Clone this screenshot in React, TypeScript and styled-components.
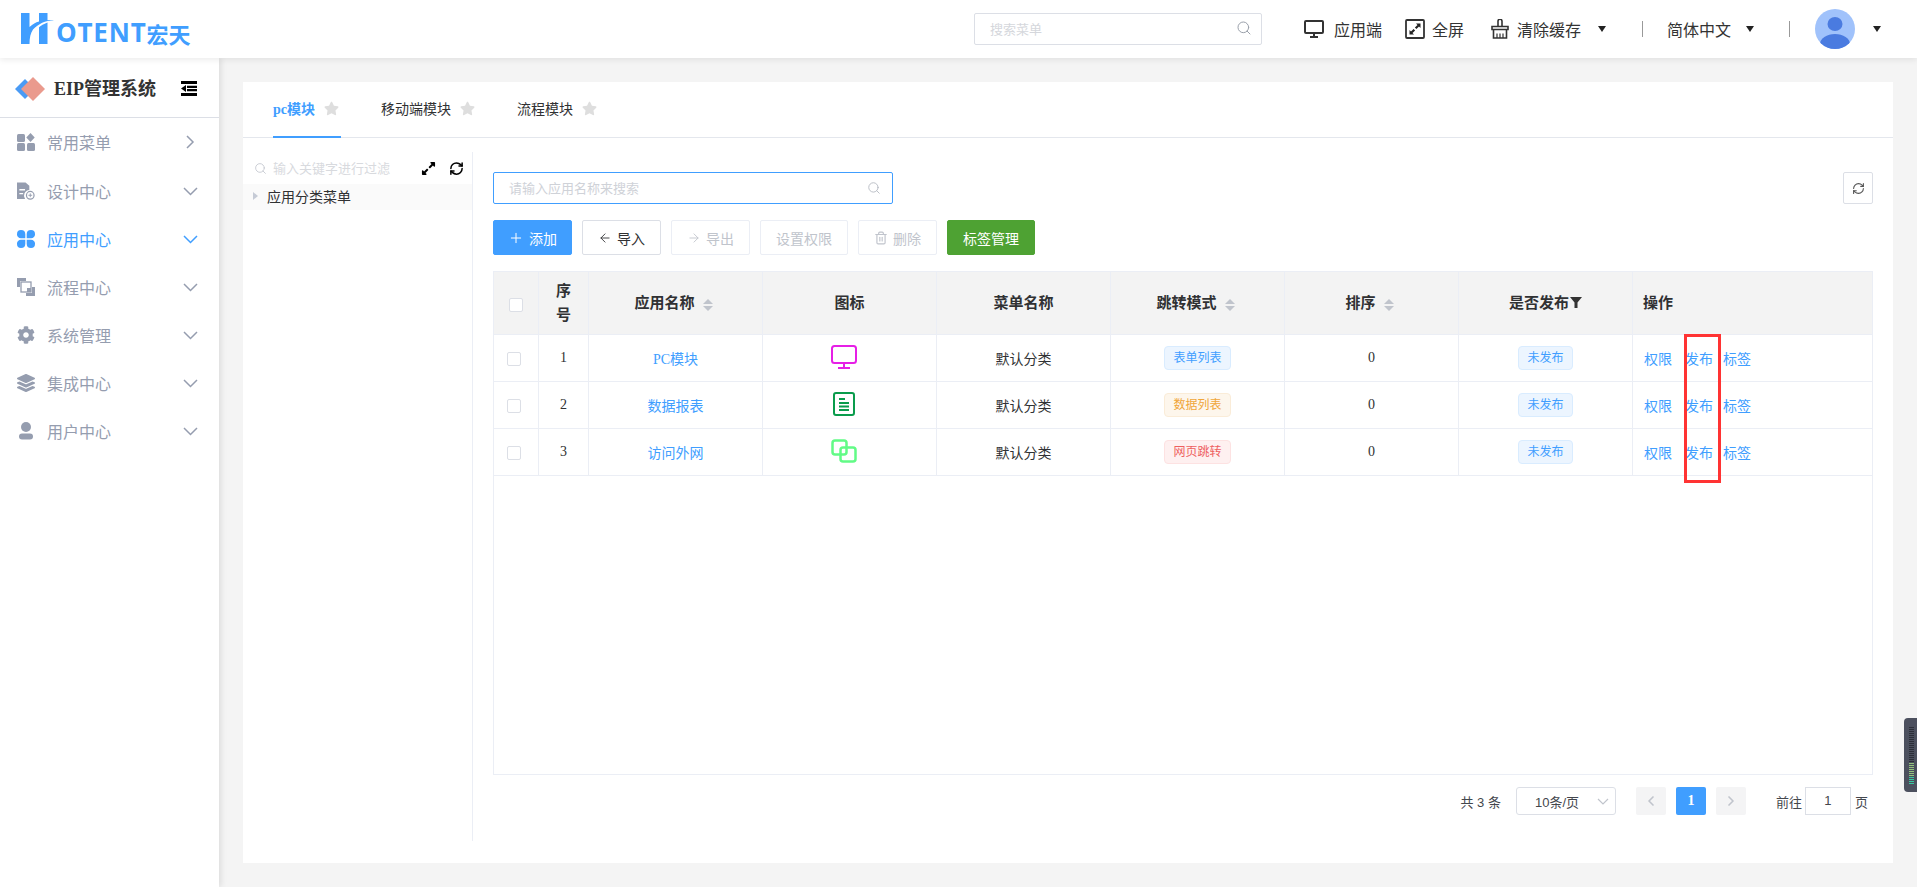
import React from 'react'
import styled, { createGlobalStyle } from 'styled-components'
import { ArrowLeft, ArrowRight, ChevronLeft, ChevronRight, Plus, RefreshCw, Search, Trash2 } from 'lucide-react'
import { FaCog, FaExpandAlt, FaLayerGroup, FaStar } from 'react-icons/fa'

const colors = {
  blue: '#409eff',
  grey: '#959daf',
  text: '#303133',
  border: '#ebeef5',
  line: '#dcdfe6',
  placeholder: '#c6c9d0',
}
const SANS = '"Liberation Sans", "Noto Sans CJK SC", sans-serif'
const SERIF = '"Liberation Serif", "Noto Sans CJK SC", serif'

const GlobalStyle = createGlobalStyle`
  html, body { margin: 0; padding: 0; height: 100%; }
  body { font-family: ${SANS}; color: ${colors.text}; background: #f4f4f4; overflow: hidden; }
  * { box-sizing: border-box; }
`

const Page = styled.div`
  display: flex;
  flex-direction: column;
  height: 100vh;
  position: relative;
`

const TopBar = styled.header`
  position: relative;
  z-index: 2;
  display: flex;
  align-items: center;
  flex: none;
  height: 58px;
  padding: 0 36px 0 21px;
  background: #fff;
  box-shadow: 0 2px 6px rgba(0, 0, 0, 0.08);
`

const Logo = styled.div`
  display: flex;
  align-items: flex-end;
  height: 32px;
  margin-right: auto;
  color: ${colors.blue};
`

const LogoLatin = styled.span`
  margin-left: 2px;
  font: 700 26px/25px "Open Sans", ${SANS};
  letter-spacing: 0.8px;
`

const LogoCjk = styled.span`
  font: 700 22px/23px "Noto Sans CJK SC", sans-serif;
`

const MenuSearch = styled.div`
  display: flex;
  align-items: center;
  justify-content: space-between;
  width: 288px;
  height: 32px;
  padding: 0 9px 2px 15px;
  border: 1px solid ${colors.line};
  border-radius: 2px;
  font-size: 13px;
  color: #d5d7dc;
  svg { color: #9aa0aa; }
`

const TopItem = styled.div<{ $gap: number; $inner?: number }>`
  display: flex;
  align-items: center;
  gap: ${p => p.$inner ?? 8}px;
  margin-left: ${p => p.$gap}px;
  font-size: 16px;
  color: #333;
`

const Caret = styled.i<{ $gap: number }>`
  margin-left: ${p => p.$gap}px;
  border-left: 4.5px solid transparent;
  border-right: 4.5px solid transparent;
  border-top: 6px solid #222;
`

const TopDivider = styled.div<{ $gap: number }>`
  width: 1px;
  height: 16px;
  margin-left: ${p => p.$gap}px;
  background: #999;
`

const Avatar = styled.div<{ $gap: number }>`
  width: 40px;
  height: 40px;
  margin-left: ${p => p.$gap}px;
  svg { display: block; }
`

const Body = styled.div`
  display: flex;
  flex: 1;
  min-height: 0;
`

const Sidebar = styled.aside`
  position: relative;
  z-index: 1;
  flex: none;
  width: 219px;
  background: #fff;
  box-shadow: 2px 0 6px rgba(0, 0, 0, 0.1);
`

const SideTitle = styled.div`
  display: flex;
  align-items: center;
  height: 60px;
  margin-bottom: 1px;
  padding: 2px 22px 0 15px;
  border-bottom: 1px solid ${colors.line};
`

const SideTitleText = styled.span`
  margin-left: 9px;
  margin-right: auto;
  font: 700 18px/24px ${SERIF};
  color: #333;
`

const SideItem = styled.div<{ $active?: boolean }>`
  display: flex;
  align-items: center;
  height: 48px;
  padding: 0 21px 0 17px;
  font-size: 16px;
  color: ${p => (p.$active ? colors.blue : colors.grey)};
  span { margin-right: auto; }
  ${SideTitle} + & { height: 46px; margin-bottom: 2px; }
`

const SideIconSlot = styled.div`
  display: flex;
  flex: none;
  width: 18px;
  margin-right: 12px;
`

const Content = styled.main`
  flex: 1;
  min-width: 0;
  padding: 24px;
  background: #f4f4f4;
`

const Card = styled.div`
  display: flex;
  flex-direction: column;
  height: 100%;
  background: #fff;
`

const Tabs = styled.div`
  display: flex;
  flex: none;
  gap: 40px;
  height: 56px;
  padding-left: 30px;
  border-bottom: 1px solid #e4e7ed;
`

const Tab = styled.div<{ $active?: boolean }>`
  display: flex;
  align-items: center;
  gap: 9px;
  height: 56px;
  padding: 2px 2px 0 0;
  font: ${p => (p.$active ? 700 : 400)} 14px/20px ${SERIF};
  color: ${p => (p.$active ? colors.blue : colors.text)};
  border-bottom: 2px solid ${p => (p.$active ? colors.blue : 'transparent')};
  svg { color: #dedede; margin-top: -4px; }
`

const CardBody = styled.div`
  display: flex;
  flex: 1;
  min-height: 0;
  padding: 14px 0 22px;
`

const TreePanel = styled.div`
  flex: none;
  width: 230px;
  border-right: 1px solid ${colors.border};
`

const TreeFilter = styled.div`
  display: flex;
  align-items: center;
  height: 32px;
  padding: 0 8px 0 11px;
  font-size: 13px;
  color: #d8dade;
  span { margin: 0 auto 2px 6px; }
`

const TreeTool = styled.div`
  display: flex;
  align-items: center;
  margin-left: 13px;
  color: #000;
`

const TreeRow = styled.div`
  display: flex;
  align-items: center;
  height: 26px;
  padding: 0 0 2px 10px;
  background: #fafafa;
  font-size: 14px;
  color: ${colors.text};
  i {
    margin-right: 9px;
    border-top: 4px solid transparent;
    border-bottom: 4px solid transparent;
    border-left: 5px solid #c6cbd6;
  }
`

const Main = styled.div`
  display: flex;
  flex: 1;
  flex-direction: column;
  min-width: 0;
  padding: 20px 20px 26px;
`

const SearchRow = styled.div`
  display: flex;
  align-items: center;
  justify-content: space-between;
  flex: none;
  height: 32px;
`

const AppSearch = styled.div`
  display: flex;
  align-items: center;
  justify-content: space-between;
  width: 400px;
  height: 32px;
  padding: 0 11px 2px 15px;
  border: 1px solid ${colors.blue};
  border-radius: 2px;
  font-size: 13px;
  color: #cfd2d8;
  svg { color: #b4b8c0; margin-top: 2px; }
`

const RefreshButton = styled.div`
  display: flex;
  align-items: center;
  justify-content: center;
  width: 30px;
  height: 32px;
  border: 1px solid ${colors.line};
  border-radius: 2px;
  color: #555;
`

const Toolbar = styled.div`
  display: flex;
  flex: none;
  gap: 10px;
  margin: 16px 0;
`

const Button = styled.div<{ $width: number; $kind?: 'primary' | 'success' | 'plain' | 'disabled' }>`
  display: flex;
  align-items: center;
  justify-content: center;
  gap: 5px;
  width: ${p => p.$width}px;
  height: 35px;
  border-radius: 2px;
  font-size: 14px;
  color: ${p =>
    p.$kind === 'primary' || p.$kind === 'success' ? '#fff' : p.$kind === 'plain' ? colors.text : '#c0c4cc'};
  background: ${p => (p.$kind === 'primary' ? colors.blue : p.$kind === 'success' ? '#4ea233' : '#fff')};
  border: 1px solid
    ${p =>
      p.$kind === 'primary' ? colors.blue : p.$kind === 'success' ? '#4ea233' : p.$kind === 'plain' ? colors.line : colors.border};
`

const TableFrame = styled.div`
  position: relative;
  flex: 1;
  min-height: 0;
  border: 1px solid ${colors.border};
`

const Table = styled.table`
  width: 100%;
  table-layout: fixed;
  border-collapse: separate;
  border-spacing: 0;
  font-family: ${SERIF};
  font-size: 14px;
`

const Th = styled.th<{ $left?: boolean }>`
  height: 63px;
  padding: 0 10px;
  background: #f3f3f3;
  border-right: 1px solid ${colors.border};
  border-bottom: 1px solid ${colors.border};
  font-size: 15px;
  font-weight: 700;
  line-height: 24px;
  color: ${colors.text};
  text-align: ${p => (p.$left ? 'left' : 'center')};
  &:last-child { border-right: 0; }
`

const Td = styled.td`
  height: 47px;
  padding: 0 8px;
  border-right: 1px solid ${colors.border};
  border-bottom: 1px solid ${colors.border};
  color: ${colors.text};
  text-align: center;
  &:last-child { border-right: 0; padding-left: 11px; }
`

const CheckBox = styled.span<{ $shift: number }>`
  display: inline-block;
  position: relative;
  left: ${p => p.$shift}px;
  width: 14px;
  height: 14px;
  vertical-align: middle;
  background: #fff;
  border: 1px solid ${colors.line};
  border-radius: 2px;
`

const SortCaret = styled.span`
  display: inline-flex;
  flex-direction: column;
  gap: 2px;
  margin: 0 4px 0 8px;
  vertical-align: middle;
  &::before, &::after { content: ''; border-left: 5px solid transparent; border-right: 5px solid transparent; }
  &::before { border-bottom: 5px solid #c0c4cc; }
  &::after { border-top: 5px solid #c0c4cc; }
`

const FilterIcon = styled.svg`
  margin-left: 1px;
  vertical-align: 0;
`

const AppLink = styled.a`
  color: ${colors.blue};
`

const RowIcon = styled.svg`
  display: block;
  margin: -3px auto 0 calc(50% - 19px);
`

const tagTones = {
  blue: { color: '#409eff', bg: '#ecf5ff', line: '#d9ecff' },
  orange: { color: '#f0a63a', bg: '#fdf6ec', line: '#faecd8' },
  red: { color: '#ee5f5f', bg: '#fef0f0', line: '#fde2e2' },
}

const Tag = styled.span<{ $tone: keyof typeof tagTones }>`
  display: inline-block;
  height: 24px;
  padding: 0 8px;
  border-radius: 4px;
  font: 12px/22px ${SANS};
  color: ${p => tagTones[p.$tone].color};
  background: ${p => tagTones[p.$tone].bg};
  border: 1px solid ${p => tagTones[p.$tone].line};
`

const Actions = styled.div`
  display: flex;
  gap: 13px;
  margin-top: -1px;
  font-size: 14px;
  color: ${colors.blue};
  font-family: ${SANS};
  span:last-child { margin-left: -3px; }
`

const RedMark = styled.div`
  position: absolute;
  left: 1190px;
  top: 62px;
  width: 37px;
  height: 149px;
  border: 3px solid #ff3333;
  pointer-events: none;
`

const Pager = styled.div`
  display: flex;
  align-items: center;
  justify-content: flex-end;
  flex: none;
  height: 28px;
  margin-top: 12px;
  padding-right: 5px;
  font-size: 13px;
  color: #44474d;
`

const PageSize = styled.div`
  display: flex;
  align-items: center;
  justify-content: space-between;
  width: 100px;
  height: 28px;
  margin: 0 20px 0 15px;
  padding: 0 6px 0 18px;
  border: 1px solid ${colors.line};
  border-radius: 3px;
  svg { color: #c0c4cc; }
`

const PageButton = styled.div<{ $active?: boolean }>`
  display: flex;
  align-items: center;
  justify-content: center;
  width: 30px;
  height: 28px;
  margin-right: 10px;
  border-radius: 2px;
  font: 700 14px ${SERIF};
  color: ${p => (p.$active ? '#fff' : '#c0c4cc')};
  background: ${p => (p.$active ? colors.blue : '#f4f4f5')};
`

const JumpLabel = styled.span`
  margin-left: 20px;
`

const JumpInput = styled.div`
  width: 46px;
  height: 28px;
  margin: 0 4px 0 3px;
  border: 1px solid ${colors.line};
  font-size: 13px;
  line-height: 26px;
  text-align: center;
`

const EdgeWidget = styled.div`
  position: absolute;
  right: 0;
  top: 718px;
  z-index: 3;
  width: 13px;
  height: 74px;
  padding: 9px 3px 8px 5px;
  border-radius: 4px 0 0 4px;
  background: #4c505e;
  &::before {
    content: '';
    display: block;
    height: 100%;
    background:
      repeating-linear-gradient(to bottom, transparent 0 1px, #4c505e 1px 2px),
      linear-gradient(to bottom, #2c2f38 0 62%, #93c47d 62% 86%, #37c9a0 86%);
  }
`

const MonitorIcon = () => (
  <svg width="20" height="18" viewBox="0 0 20 18" fill="none">
    <rect x="1" y="1" width="18" height="12" rx="1" stroke="#333" strokeWidth="2" />
    <path d="M10 13v3M6 17h8" stroke="#333" strokeWidth="2" />
  </svg>
)

const FullIcon = () => (
  <svg width="20" height="20" viewBox="0 0 20 20" fill="none">
    <rect x="1" y="1" width="18" height="18" rx="1" stroke="#333" strokeWidth="1.8" />
    <path d="M11 4.500h4.500V9l-1.500-1.500-2.600 2.600-1.500-1.500 2.600-2.600zM9 15.500H4.500V11L6 12.500l2.600-2.600 1.500 1.500-2.600 2.600z" fill="#222" />
  </svg>
)

const BroomIcon = () => (
  <svg width="20" height="20" viewBox="0 0 20 20" fill="none" stroke="#333" strokeWidth="1.6">
    <path d="M8 7V2.200a2 2 0 0 1 4 0V7" />
    <path d="M2 7.500h16v3H2zM3.500 10.500V19h13v-8.500" />
    <path d="M7 14.500V19M10 14.500V19M13 14.500V19" strokeWidth="1.2" />
  </svg>
)

const HMark = () => (
  <svg width="33" height="31" viewBox="0 0 33 31" style={{ display: 'block', marginBottom: 1 }}>
    <path d="M0 0h8.500v14C12 11 14.500 9.500 18 8.500V0h8.500v7.200c2-.2 4.500-.2 6.500 0-9 .3-15.500 3.500-21 9.300C9.500 20 8.500 25 8.500 31H0z" fill={colors.blue} />
    <path d="M26.500 9.500V31H18V14.300c2.500-2 5.500-3.700 8.500-4.800z" fill={colors.blue} />
  </svg>
)

const DiamondLogo = () => (
  <svg width="30" height="24" viewBox="0 0 30 24">
    <path d="M10 2l10 10-10 10L0 12z" fill="#4a9bf5" />
    <path d="M18 0l12 12-12 12L6 12z" fill="#ea9a8d" />
  </svg>
)

const CollapseIcon = () => (
  <svg width="16" height="15" viewBox="0 0 16 15" fill="#000">
    <path d="M0 0h16v3H0zM0 12h16v3H0zM6 4.800h10v2.200H6zM6 8h10v2.200H6zM0 7.500l5-3.500v7z" />
  </svg>
)

const SideGlyph = ({ name }: { name: string }) => {
  if (name === 'grid')
    return (
      <svg width="18" height="18" viewBox="0 0 18 18" fill="currentColor">
        <rect x="0" y="1" width="8" height="8" rx="1.500" />
        <path d="M13.500 0l4.200 4.500-4.200 4.500-4.200-4.500z" />
        <rect x="0" y="10" width="8" height="8" rx="1.500" />
        <rect x="10" y="10" width="8" height="8" rx="1.500" />
      </svg>
    )
  if (name === 'doc')
    return (
      <svg width="19" height="18" viewBox="0 0 19 18" fill="currentColor">
        <path d="M0 0h9l4 3.500V8a6 6 0 0 0-4.500 9.500H0z" />
        <path d="M2.500 7h6v1.500h-6zM2.500 11h4v1.500h-4z" fill="#fff" />
        <circle cx="14" cy="13.500" r="4" fill="none" stroke="currentColor" strokeWidth="1.300" />
        <path d="M14 11.500v4M12 13.500h4" stroke="currentColor" strokeWidth="1" />
      </svg>
    )
  if (name === 'petal')
    return (
      <svg width="18" height="18" viewBox="0 0 18 18" fill="currentColor">
        <path d="M0 4a4 4 0 0 1 4-4c3 0 4.300 1.500 4.300 4.300v4H4a4 4 0 0 1-4-4.300z" />
        <path d="M18 4a4 4 0 0 0-4-4c-3 0-4.300 1.500-4.300 4.300v4H14a4 4 0 0 0 4-4.300z" />
        <path d="M0 14a4 4 0 0 0 4 4c3 0 4.300-1.500 4.300-4.300v-4H4a4 4 0 0 0-4 4.300z" />
        <path d="M18 14a4 4 0 0 1-4 4c-3 0-4.300-1.500-4.300-4.300v-4H14a4 4 0 0 1 4 4.300z" />
      </svg>
    )
  if (name === 'flow')
    return (
      <svg width="18" height="18" viewBox="0 0 18 18" fill="currentColor">
        <path d="M0 0h9v3H3v6H0zM18 18H9v-3h6V9h3z" />
        <rect x="4" y="4" width="10" height="10" fill="none" stroke="currentColor" strokeWidth="1.300" />
        <rect x="10" y="10" width="4" height="4" />
      </svg>
    )
  if (name === 'gear') return <FaCog size={18} />
  if (name === 'layers') return <FaLayerGroup size={18} />
  return (
    <svg width="18" height="18" viewBox="0 0 18 18" fill="currentColor">
      <circle cx="9" cy="5" r="5" />
      <rect x="2" y="11.500" width="14" height="6" rx="3" />
    </svg>
  )
}

const Chevron = ({ open }: { open: boolean }) =>
  open ? (
    <svg width="15" height="9" viewBox="0 0 15 9" fill="none" stroke="currentColor" strokeWidth="1.500">
      <path d="M1 1l6.500 6.500L14 1" />
    </svg>
  ) : (
    <svg width="15" height="14" viewBox="0 0 15 14" fill="none" stroke="currentColor" strokeWidth="1.500">
      <path d="M4 1l6 6-6 6" />
    </svg>
  )

const sideItems = [
  { label: '常用菜单', icon: 'grid' },
  { label: '设计中心', icon: 'doc', open: true },
  { label: '应用中心', icon: 'petal', open: true, active: true },
  { label: '流程中心', icon: 'flow', open: true },
  { label: '系统管理', icon: 'gear', open: true },
  { label: '集成中心', icon: 'layers', open: true },
  { label: '用户中心', icon: 'user', open: true },
]

const RowGlyph = ({ kind }: { kind: string }) => {
  if (kind === 'monitor')
    return (
      <RowIcon width="26" height="24" viewBox="0 0 26 24" fill="none" stroke="#e61fe6" strokeWidth="2">
        <rect x="1" y="1" width="24" height="17" rx="2.500" />
        <path d="M13 18v5M7 23h12" />
      </RowIcon>
    )
  if (kind === 'doc')
    return (
      <RowIcon width="26" height="24" viewBox="0 0 26 24" fill="none" stroke="#0a9c4c" strokeWidth="2">
        <rect x="3" y="1" width="20" height="22" rx="2" />
        <path d="M8 7h6M8 11h10M8 14.500h10M8 18h10" />
      </RowIcon>
    )
  return (
    <RowIcon width="26" height="24" viewBox="0 0 26 24" fill="none" stroke="#62fb86" strokeWidth="2.500">
      <rect x="1.500" y="1.500" width="14" height="14" rx="2.500" />
      <rect x="9.500" y="8.500" width="15" height="14" rx="2.500" />
    </RowIcon>
  )
}

const rows = [
  { id: 1, name: 'PC模块', icon: 'monitor', jump: '表单列表', tone: 'blue' as const },
  { id: 2, name: '数据报表', icon: 'doc', jump: '数据列表', tone: 'orange' as const },
  { id: 3, name: '访问外网', icon: 'link', jump: '网页跳转', tone: 'red' as const },
]

const columns = [45, 50, 174, 174, 174, 174, 174, 174]

const App: React.FunctionComponent = () => {
  return (
    <Page>
      <GlobalStyle />
      <TopBar>
        <Logo>
          <HMark />
          <LogoLatin>OTENT</LogoLatin>
          <LogoCjk>宏天</LogoCjk>
        </Logo>
        <MenuSearch>
          搜索菜单
          <Search size={16} strokeWidth={1.5} />
        </MenuSearch>
        <TopItem $gap={42} $inner={10}>
          <MonitorIcon />
          <span>应用端</span>
        </TopItem>
        <TopItem $gap={23} $inner={7}>
          <FullIcon />
          <span>全屏</span>
        </TopItem>
        <TopItem $gap={26} $inner={7}>
          <BroomIcon />
          <span>清除缓存</span>
        </TopItem>
        <Caret $gap={17} />
        <TopDivider $gap={36} />
        <TopItem $gap={24}>简体中文</TopItem>
        <Caret $gap={15} />
        <TopDivider $gap={35} />
        <Avatar $gap={25}>
          <svg width="40" height="40" viewBox="0 0 40 40">
            <defs>
              <clipPath id="avatar-clip">
                <circle cx="20" cy="20" r="20" />
              </clipPath>
            </defs>
            <circle cx="20" cy="20" r="20" fill="#a0c2fb" />
            <g clipPath="url(#avatar-clip)" fill="#4a7be0">
              <ellipse cx="20" cy="15" rx="7.500" ry="7" />
              <ellipse cx="20" cy="35" rx="15" ry="10" />
            </g>
          </svg>
        </Avatar>
        <Caret $gap={18} />
      </TopBar>
      <Body>
        <Sidebar>
          <SideTitle>
            <DiamondLogo />
            <SideTitleText>EIP管理系统</SideTitleText>
            <CollapseIcon />
          </SideTitle>
          {sideItems.map(item => (
            <SideItem key={item.label} $active={item.active}>
              <SideIconSlot>
                <SideGlyph name={item.icon} />
              </SideIconSlot>
              <span>{item.label}</span>
              <Chevron open={!!item.open} />
            </SideItem>
          ))}
        </Sidebar>
        <Content>
          <Card>
            <Tabs>
              <Tab $active>
                pc模块 <FaStar size={15} />
              </Tab>
              <Tab>
                移动端模块 <FaStar size={15} />
              </Tab>
              <Tab>
                流程模块 <FaStar size={15} />
              </Tab>
            </Tabs>
            <CardBody>
              <TreePanel>
                <TreeFilter>
                  <Search size={13} strokeWidth={1.5} color="#c0c4cc" />
                  <span>输入关键字进行过滤</span>
                  <TreeTool>
                    <FaExpandAlt size={15} />
                  </TreeTool>
                  <TreeTool>
                    <RefreshCw size={15} strokeWidth={2.4} />
                  </TreeTool>
                </TreeFilter>
                <TreeRow>
                  <i />
                  应用分类菜单
                </TreeRow>
              </TreePanel>
              <Main>
                <SearchRow>
                  <AppSearch>
                    请输入应用名称来搜索
                    <Search size={14} strokeWidth={1.5} />
                  </AppSearch>
                  <RefreshButton>
                    <RefreshCw size={13} />
                  </RefreshButton>
                </SearchRow>
                <Toolbar>
                  <Button $width={79} $kind="primary">
                    <Plus size={16} strokeWidth={1.5} />
                    添加
                  </Button>
                  <Button $width={79} $kind="plain">
                    <ArrowLeft size={14} strokeWidth={1.5} />
                    导入
                  </Button>
                  <Button $width={79} $kind="disabled">
                    <ArrowRight size={14} strokeWidth={1.5} />
                    导出
                  </Button>
                  <Button $width={88} $kind="disabled">
                    设置权限
                  </Button>
                  <Button $width={79} $kind="disabled">
                    <Trash2 size={14} />
                    删除
                  </Button>
                  <Button $width={88} $kind="success">
                    标签管理
                  </Button>
                </Toolbar>
                <TableFrame>
                  <Table>
                    <colgroup>
                      {columns.map((width, index) => (
                        <col key={index} width={width} />
                      ))}
                      <col />
                    </colgroup>
                    <thead>
                      <tr>
                        <Th>
                          <CheckBox $shift={0} />
                        </Th>
                        <Th>序号</Th>
                        <Th>
                          应用名称
                          <SortCaret />
                        </Th>
                        <Th>图标</Th>
                        <Th>菜单名称</Th>
                        <Th>
                          跳转模式
                          <SortCaret />
                        </Th>
                        <Th>
                          排序
                          <SortCaret />
                        </Th>
                        <Th>
                          是否发布
                          <FilterIcon width="12" height="11" viewBox="0 0 12 11" fill="#333">
                            <path d="M0 0h12L7.500 5.500V11h-3V5.500z" />
                          </FilterIcon>
                        </Th>
                        <Th $left>操作</Th>
                      </tr>
                    </thead>
                    <tbody>
                      {rows.map(row => (
                        <tr key={row.id}>
                          <Td>
                            <CheckBox $shift={-2} />
                          </Td>
                          <Td>{row.id}</Td>
                          <Td>
                            <AppLink>{row.name}</AppLink>
                          </Td>
                          <Td>
                            <RowGlyph kind={row.icon} />
                          </Td>
                          <Td>默认分类</Td>
                          <Td>
                            <Tag $tone={row.tone}>{row.jump}</Tag>
                          </Td>
                          <Td>0</Td>
                          <Td>
                            <Tag $tone="blue">未发布</Tag>
                          </Td>
                          <Td>
                            <Actions>
                              <span>权限</span>
                              <span>发布</span>
                              <span>标签</span>
                            </Actions>
                          </Td>
                        </tr>
                      ))}
                    </tbody>
                  </Table>
                  <RedMark />
                </TableFrame>
                <Pager>
                  共 3 条
                  <PageSize>
                    10条/页
                    <svg width="12" height="7" viewBox="0 0 12 7" fill="none" stroke="currentColor" strokeWidth="1.200">
                      <path d="M1 1l5 5 5-5" />
                    </svg>
                  </PageSize>
                  <PageButton>
                    <ChevronLeft size={16} strokeWidth={2.5} />
                  </PageButton>
                  <PageButton $active>1</PageButton>
                  <PageButton>
                    <ChevronRight size={16} strokeWidth={2.5} />
                  </PageButton>
                  <JumpLabel>前往</JumpLabel>
                  <JumpInput>1</JumpInput>
                  页
                </Pager>
              </Main>
            </CardBody>
          </Card>
        </Content>
      </Body>
      <EdgeWidget />
    </Page>
  )
}

export default App
